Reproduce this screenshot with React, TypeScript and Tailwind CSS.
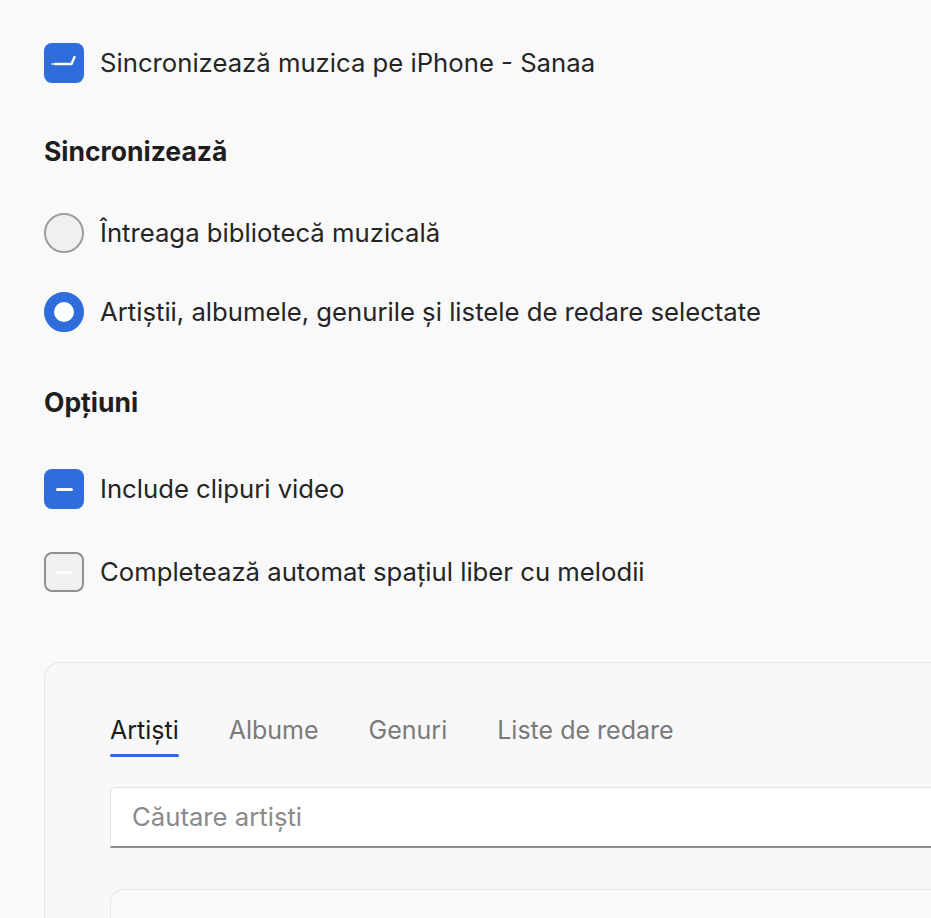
import React from "react";

const font = { fontFamily: "Inter, 'Noto Sans', sans-serif" };

function CheckMark() {
	return (
		<svg width="40" height="40" viewBox="0 0 40 40" fill="none">
			<circle cx="8.6" cy="21" r="1.1" fill="#fff" />
			<path d="M11 21 H27.5 L30.5 14" stroke="#fff" strokeWidth="2.4" strokeLinecap="round" strokeLinejoin="round" />
		</svg>
	);
}

function Checkbox({ state }: { state: "checked" | "mixed" | "off" }) {
	if (state === "off") {
		return (
			<div className="w-10 h-10 shrink-0 rounded-[8px] border-2 border-[#8f8f8f] bg-[#f0f0f0] flex items-center justify-center">
				<div className="w-[16px] h-[3px] rounded-full bg-[#fbfbfb]" />
			</div>
		);
	}
	return (
		<div className="w-10 h-10 shrink-0 rounded-[8px] bg-[#2e6ddb] flex items-center justify-center">
			{state === "checked" ? <CheckMark /> : <div className="w-[17px] h-[3px] rounded-full bg-white" />}
		</div>
	);
}

function Radio({ on }: { on?: boolean }) {
	return on ? (
		<div className="w-10 h-10 shrink-0 rounded-full border-[10px] border-[#2e6ddb] bg-white" />
	) : (
		<div className="w-10 h-10 shrink-0 rounded-full border-2 border-[#9d9d9d] bg-[#f0f0f0]" />
	);
}

function Row({ control, label, className }: { control: React.ReactNode; label: string; className?: string }) {
	return (
		<div className={`flex items-center gap-4 h-10 ${className ?? ""}`}>
			{control}
			<span className="text-[25.7px] leading-8 text-[#252525] whitespace-nowrap">{label}</span>
		</div>
	);
}

const tabs = ["Artiști", "Albume", "Genuri", "Liste de redare"];

export default function App() {
	return (
		<div className="min-h-screen w-full overflow-hidden bg-[#f9f9f9] pl-[44px] pt-[43px]" style={font}>
			<Row control={<Checkbox state="checked" />} label="Sincronizează muzica pe iPhone - Sanaa" />

			<h2 className="mt-[52px] text-[26.5px] leading-8 font-bold text-[#1e1e1e]">Sincronizează</h2>

			<Row className="mt-[46px]" control={<Radio />} label="Întreaga bibliotecă muzicală" />
			<Row className="mt-[39px]" control={<Radio on />} label="Artiștii, albumele, genurile și listele de redare selectate" />

			<h2 className="mt-[54px] text-[26.5px] leading-8 font-bold text-[#1e1e1e]">Opțiuni</h2>

			<Row className="mt-[51px]" control={<Checkbox state="mixed" />} label="Include clipuri video" />
			<Row className="mt-[43px]" control={<Checkbox state="off" />} label="Completează automat spațiul liber cu melodii" />

			<div className="mt-[70px] w-[1000px] border-l border-t border-[#e6e6e6] rounded-tl-[16px] bg-[#f8f8f8] pl-[65px] pt-[51px] pb-10">
				<div className="flex gap-[50px]">
					{tabs.map((t, i) => (
						<div key={t} className="flex flex-col">
							<span className={`text-[25px] leading-8 ${i === 0 ? "text-[#1a1a1a]" : "text-[#7a7a7a]"}`}>{t}</span>
							<div className={`mt-[8px] h-[3px] rounded-full ${i === 0 ? "bg-[#2e6ddb]" : "bg-transparent"}`} />
						</div>
					))}
				</div>

				<div className="mt-[30px] h-[61px] bg-white border border-[#e4e4e4] border-b-2 border-b-[#8c8c8c] rounded-t-[6px] flex items-center pl-[21px]">
					<span className="text-[25.7px] leading-8 text-[#8a8a8a]">Căutare artiști</span>
				</div>

				<div className="mt-[41px] h-[120px] border-l border-t border-[#e8e8e8] rounded-tl-[14px] bg-[#f9f9f9]" />
			</div>
		</div>
	);
}
